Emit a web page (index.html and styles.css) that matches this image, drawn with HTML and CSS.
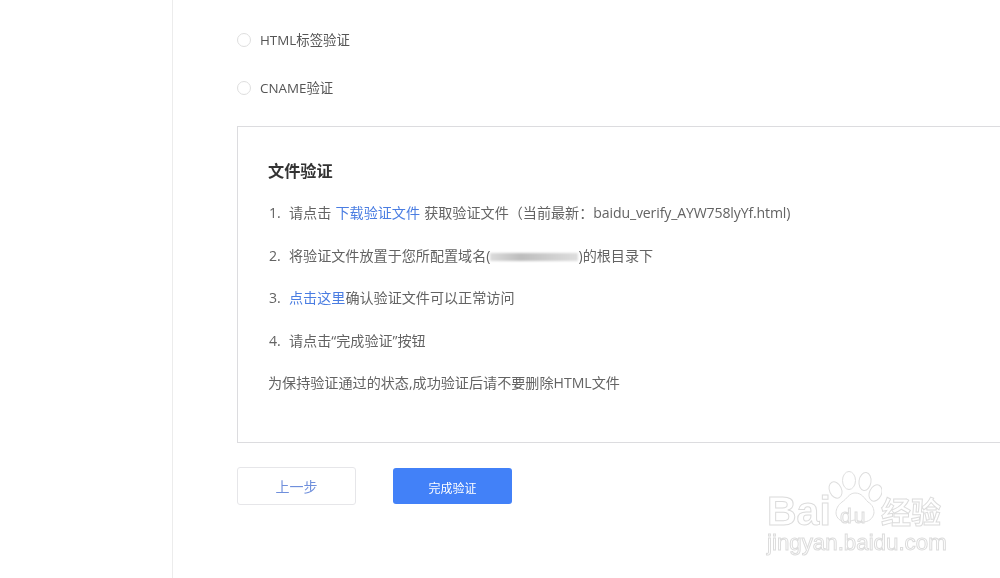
FILE: index.html
```html
<!DOCTYPE html>
<html lang="zh-CN">
<head>
<meta charset="utf-8">
<title>文件验证</title>
<link rel="stylesheet" href="styles.css">
</head>
<body>
<div class="page">
  <aside class="sidebar"></aside>
  <main class="main">
    <div class="option"><span class="radio"></span><span>HTML标签验证</span></div>
    <div class="option"><span class="radio"></span><span>CNAME验证</span></div>
    <section class="panel">
      <h2 class="panel-title">文件验证</h2>
      <p class="step"><span class="num">1.</span>请点击 <a class="link">下载验证文件</a> 获取验证文件（当前最新：<span class="filename">baidu_verify_AYW758lyYf.html</span>)</p>
      <p class="step"><span class="num">2.</span>将验证文件放置于您所配置域名(<span class="redacted"></span>)的根目录下</p>
      <p class="step"><span class="num">3.</span><a class="link">点击这里</a>确认验证文件可以正常访问</p>
      <p class="step"><span class="num">4.</span>请点击“完成验证”按钮</p>
      <p class="step">为保持验证通过的状态,成功验证后请不要删除HTML文件</p>
    </section>
    <div class="actions">
      <button class="btn btn-ghost">上一步</button>
      <button class="btn btn-primary">完成验证</button>
    </div>
  </main>
</div>
<div class="watermark">
  <svg class="paw" viewBox="0 0 54 53" width="54" height="53" aria-hidden="true">
    <g fill="#fff" stroke="#dedede" stroke-width="1">
      <ellipse cx="7.500" cy="19" rx="6" ry="8.500" transform="rotate(-25 7.500 19)"/>
      <ellipse cx="21" cy="9.500" rx="6.500" ry="9"/>
      <ellipse cx="37" cy="10.500" rx="6" ry="9" transform="rotate(8 37 10.500)"/>
      <ellipse cx="47.500" cy="22" rx="6" ry="8.500" transform="rotate(25 47.500 22)"/>
      <path d="M27 22c7 0 9 5 13 9 5 3 6 7 6 11-1 6-6 9-11 9-3 0-5-2-8-2s-5 2-9 2c-5 0-10-4-10-9 0-4 2-8 6-11 5-3 7-9 13-9z"/>
    </g>
  </svg>
  <div class="wm-bai">Bai</div>
  <div class="wm-du">du</div>
  <div class="wm-cn">经验</div>
  <div class="wm-url">jingyan.baidu.com</div>
</div>
</body>
</html>
```

FILE: styles.css
```css
* { box-sizing: border-box; }
html, body { margin: 0; height: 100%; overflow: hidden; background: #fff; }
body {
  font-family: "Open Sans", "Noto Sans CJK SC", sans-serif;
  font-size: 14px;
  color: #555;
  position: relative;
}
.page { display: flex; height: 578px; filter: blur(0.4px); }
.sidebar { width: 173px; flex: none; border-right: 1px solid #ececec; }
.main { flex: 1; padding: 15px 0 0 64px; min-width: 0; }
.option { display: flex; align-items: center; gap: 9px; height: 48px; color: #555; font-size: 13.400px; }
.radio { width: 14px; height: 14px; border-radius: 50%; border: 1px solid #dedede; background: #fff; flex: none; position: relative; top: 1px; }
.panel {
  margin-top: 15px;
  width: 800px;
  height: 317px;
  border: 1px solid #dcdcdf;
  padding: 30px 0 0 30px;
}
.panel-title { margin: 0 0 16px; font-size: 16.200px; line-height: 28px; font-weight: 700; color: #333; }
.step { margin: 0 0 18px; font-size: 14.100px; line-height: 24.500px; white-space: nowrap; color: #636363; word-spacing: 0.500px; }
.num { display: inline-block; width: 21px; padding-left: 1px; }
.link { color: #4a7de2; }
.filename { letter-spacing: -0.140px; }
.redacted {
  display: inline-block; width: 88px; height: 8px; vertical-align: 0;
  background: linear-gradient(90deg, #dcdcdc, #bdbdbd 35%, #cfcfcf 70%, #dedede);
  filter: blur(1px);
}
.actions { display: flex; gap: 37px; margin-top: 24px; align-items: center; }
.btn { width: 119px; font: inherit; border-radius: 3px; padding: 0; }
.btn-ghost { height: 38px; background: #fff; border: 1px solid #e6e6e9; color: #6f8fdc; font-size: 14px; }
.btn-primary { height: 36px; padding-top: 3px; background: #4281f8; border: 0; color: #fff; font-size: 12px; }
.watermark { position: absolute; left: 766px; top: 470px; width: 190px; height: 100px; font-family: "Liberation Sans", sans-serif; color: #fff; filter: blur(0.3px); }
.paw { position: absolute; left: 62px; top: 1px; }
.wm-bai, .wm-du, .wm-cn, .wm-url { position: absolute; white-space: nowrap; line-height: 1; -webkit-text-stroke: 1px #dcdcdc; }
.wm-bai { left: 1px; top: 21px; font-size: 41px; font-weight: 700; }
.wm-du { left: 74px; top: 35px; font-size: 21px; letter-spacing: 2px; }
.wm-cn { left: 115px; top: 25px; font-family: "Noto Sans CJK SC", sans-serif; font-size: 30px; font-weight: 700; }
.wm-url { left: 1px; top: 62px; font-size: 22.300px; }
```
